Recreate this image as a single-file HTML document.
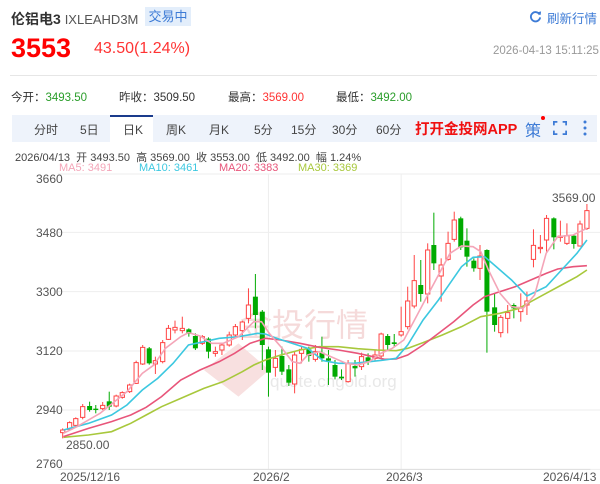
<!DOCTYPE html>
<html><head><meta charset="utf-8"><style>
*{margin:0;padding:0;box-sizing:border-box}
body{width:600px;height:482px;background:#fff;font-family:"Liberation Sans","Noto Sans CJK SC",sans-serif;position:relative;overflow:hidden;color:#333}
.a{position:absolute;white-space:nowrap}
.ax{position:absolute;font-size:12px;color:#555;white-space:nowrap}
</style></head><body>
<div class="a" style="left:11px;top:9px;font-size:14px;font-weight:bold;color:#333">伦铝电3 <span style="font-weight:normal;color:#555;font-size:13px">IXLEAHD3M</span></div>
<div class="a" style="left:145px;top:7px;width:46px;height:19px;background:#e3eefb;color:#3d7bd6;font-size:13px;line-height:19px;text-align:center">交易中</div>
<svg class="a" style="left:529px;top:10px" width="13" height="13" viewBox="0 0 14 14"><path d="M11.5 5A5 5 0 1 0 12 8" fill="none" stroke="#3d7bd6" stroke-width="2"/><path d="M9 2.5L12.5 5.5 13 1.5z" fill="#3d7bd6"/></svg>
<div class="a" style="left:547px;top:8px;font-size:12.5px;color:#3d7bd6">刷新行情</div>
<div class="a" style="left:11px;top:33px;font-size:27px;font-weight:bold;color:#f00">3553</div>
<div class="a" style="left:94px;top:40px;font-size:16px;color:#f33">43.50(1.24%)</div>
<div class="a" style="left:493px;top:45px;font-size:11.5px;color:#999">2026-04-13 15:11:25</div>
<div class="a" style="left:10px;top:75px;width:587px;height:1px;background:#e6e6e6"></div>
<div class="a" style="left:11px;top:89px;font-size:11.5px;color:#333">今开：<span style="color:#2a9d2a">3493.50</span></div>
<div class="a" style="left:119px;top:89px;font-size:11.5px;color:#333">昨收：3509.50</div>
<div class="a" style="left:228px;top:89px;font-size:11.5px;color:#333">最高：<span style="color:#f33">3569.00</span></div>
<div class="a" style="left:336px;top:89px;font-size:11.5px;color:#333">最低：<span style="color:#2a9d2a">3492.00</span></div>
<div class="a" style="left:12px;top:115px;width:585px;height:27px;background:#eef3fb"></div>
<div class="a" style="left:110px;top:115px;width:43px;height:28px;background:#fff;border-top:2px solid #1a3b8c"></div>
<div class="a" style="left:0;top:121px;font-size:12px;color:#444;width:600px">
<span class="a" style="left:34px">分时</span><span class="a" style="left:80px">5日</span><span class="a" style="left:123px">日K</span><span class="a" style="left:166px">周K</span><span class="a" style="left:209px">月K</span><span class="a" style="left:254px">5分</span><span class="a" style="left:291px">15分</span><span class="a" style="left:332px">30分</span><span class="a" style="left:376px">60分</span></div>
<div class="a" style="left:415px;top:118px;font-size:14.5px;font-weight:bold;color:#f01010">打开金投网APP</div>
<div class="a" style="left:525px;top:117px;font-size:16px;color:#3d7bd6">策</div>
<div class="a" style="left:541px;top:116px;width:4px;height:4px;border-radius:2px;background:#f00"></div>
<svg class="a" style="left:553px;top:121px" width="14" height="14" viewBox="0 0 16 16" fill="none" stroke="#3d7bd6" stroke-width="2"><path d="M1 5V1h4M11 1h4v4M15 11v4h-4M5 15H1v-4"/></svg>
<svg class="a" style="left:582px;top:119px" width="6" height="18"><circle cx="3" cy="3" r="1.5" fill="#3d7bd6"/><circle cx="3" cy="9" r="1.5" fill="#3d7bd6"/><circle cx="3" cy="15" r="1.5" fill="#3d7bd6"/></svg>
<div class="a" style="left:15px;top:149px;font-size:11px;color:#444">2026/04/13 &nbsp;开 3493.50 &nbsp;高 3569.00 &nbsp;收 3553.00 &nbsp;低 3492.00 &nbsp;幅 1.24%</div>
<div class="a" style="left:59px;top:162px;font-size:11px;color:#f4a5b8">MA5: 3491</div>
<div class="a" style="left:139px;top:162px;font-size:11px;color:#3cc8e0">MA10: 3461</div>
<div class="a" style="left:219px;top:162px;font-size:11px;color:#e8557a">MA20: 3383</div>
<div class="a" style="left:298px;top:162px;font-size:11px;color:#a8c83c">MA30: 3369</div>
<div class="a" style="left:240px;top:300px;font-size:32px;color:#f5dada">金投行情</div>
<div class="a" style="left:270px;top:372px;font-size:17px;color:#e8e8e8">quote.cngold.org</div>
<svg id="c" class="a" style="left:0;top:170px" width="600" height="312" viewBox="0 0 1560 936" preserveAspectRatio="none"></svg>
<div class="ax" style="left:36px;top:172px">3660</div>
<div class="ax" style="left:36px;top:226px">3480</div>
<div class="ax" style="left:36px;top:285px">3300</div>
<div class="ax" style="left:36px;top:344px">3120</div>
<div class="ax" style="left:36px;top:403px">2940</div>
<div class="ax" style="left:36px;top:457px">2760</div>
<div class="ax" style="left:60px;top:470px">2025/12/16</div>
<div class="ax" style="left:253px;top:470px">2026/2</div>
<div class="ax" style="left:386px;top:470px">2026/3</div>
<div class="ax" style="left:543px;top:470px">2026/4/13</div>
<div class="ax" style="left:552px;top:191px">3569.00</div>
<div class="ax" style="left:66px;top:438px">2850.00</div>
<script>
var s='';var V='vector-effect="non-scaling-stroke"';
[12,187,365,543,720,898].forEach(function(y){s+='<line x1="150" y1="'+y+'" x2="1560" y2="'+y+'" stroke="#eee" stroke-width="1" '+V+'/>'});
[698,1043].forEach(function(x){s+='<line x1="'+x+'" y1="12" x2="'+x+'" y2="898" stroke="#eee" stroke-width="1" '+V+'/>'});
s+='<line x1="155" y1="898" x2="1535" y2="898" stroke="#ddd" stroke-width="1" '+V+'/>';
s+='<path d="M530 600L620 520 700 600 620 680z" fill="#f8e0e0"/>';
function pl(p,c){s+='<polyline points="'+p+'" fill="none" stroke="'+c+'" stroke-width="1.6" '+V+'/>'}
var K=[[163,'r',780,788,775,805],[181,'r',758,778],[197,'r',746,766],[215,'r',710,742,702,748],[233,'g',708,720,695,725],[249,'g',716,720,705,730],[267,'r',706,716,696,720],[284,'g',694,710,665,720],[302,'r',678,708],[318,'r',668,682],[337,'r',645,665],[354,'r',578,640,572,642],[371,'r',532,582,525,585],[388,'g',535,580],[404,'r',572,582,560,612],[423,'r',518,575,510,580],[438,'r',475,508,465,510],[455,'r',472,480,452,490],[474,'r',475,482,440,490],[491,'g',478,492,475,500],[508,'g',498,535,490,540],[526,'r',500,520,495,525],[542,'g',506,545,502,565],[560,'r',545,550,530,560],[577,'r',525,540,518,555],[596,'r',495,525,485,530],[612,'r',470,495,462,500],[630,'r',456,482,452,510],[646,'r',405,445,355,460],[664,'g',380,435,312,475],[682,'g',425,525,420,600],[698,'g',538,608,530,680],[716,'r',565,592,540,620],[733,'g',558,605,530,615],[751,'g',598,638,585,648],[766,'r',555,642,545,670],[784,'r',538,550,530,580],[803,'g',538,558,530,575],[820,'r',545,568,525,575],[837,'g',548,565,500,575],[854,'g',565,572,540,645],[871,'g',585,620,570,628],[888,'g',620,625,598,630],[905,'r',580,635,570,638],[923,'g',588,595,570,620],[940,'r',560,590,548,600],[957,'g',562,575,550,585],[975,'r',555,565,540,572],[991,'r',492,558,488,565],[1008,'g',498,525,492,540],[1025,'g',517,522,492,530],[1043,'r',485,495,410,500],[1060,'r',393,470,350,478],[1077,'r',332,408,255,415],[1094,'g',345,372,270,395],[1112,'r',240,372,220,400],[1128,'g',225,280,128,300],[1147,'r',285,318,265,395],[1165,'r',220,268,185,272],[1181,'r',150,208,125,215],[1198,'g',145,232,140,240],[1214,'g',212,260,175,290],[1232,'g',272,295,265,305],[1248,'r',258,295,225,330],[1266,'g',240,425,238,548],[1286,'g',412,465,370,485],[1302,'r',442,488,435,502],[1320,'r',428,445,405,490],[1336,'g',405,415,400,445],[1354,'r',412,425,370,455],[1370,'r',393,405,365,435],[1387,'r',226,268,178,292],[1405,'r',232,236,195,250],[1421,'r',145,210,135,245],[1440,'g',145,202,142,238],[1457,'r',198,202,152,215],[1474,'r',197,220,160,225],[1492,'g',197,222,195,236],[1508,'r',162,228,152,230],[1526,'r',122,175,102,180]];
K.forEach(function(k){var c=k[1]=='r'?'#f44':'#0a0';var t=k[2],b=k[3],h=k[4]||t-4,l=k[5]||b+4;
s+='<line x1="'+k[0]+'" y1="'+h+'" x2="'+k[0]+'" y2="'+l+'" stroke="'+c+'" stroke-width="1" '+V+'/>';
if(k[1]=='r')s+='<rect x="'+(k[0]-5.5)+'" y="'+t+'" width="11" height="'+Math.max(b-t,3)+'" fill="#fff" stroke="'+c+'" stroke-width="1" '+V+'/>';
else s+='<rect x="'+(k[0]-6.5)+'" y="'+t+'" width="13" height="'+Math.max(b-t,4)+'" fill="'+c+'"/>';});
pl('165,802 230,795 290,785 340,760 380,735 420,710 470,685 530,655 580,635 630,605 660,585 690,570 730,555 780,540 830,530 880,530 930,536 980,540 1030,542 1060,535 1100,518 1150,495 1200,470 1250,440 1300,430 1350,415 1380,395 1420,370 1460,345 1500,320 1526,300','#a8c83c');
pl('165,800 230,775 290,755 340,735 380,712 420,680 470,630 520,600 570,575 610,550 650,520 690,505 730,510 780,520 830,532 880,540 930,550 970,560 1000,568 1030,567 1060,555 1100,525 1140,490 1180,455 1230,405 1260,380 1300,365 1340,350 1380,330 1420,310 1450,297 1490,290 1526,287','#e8557a');
pl('165,780 230,760 290,735 330,705 370,660 410,625 450,580 490,525 530,515 570,505 620,500 670,490 690,492 720,505 760,520 800,535 840,572 880,580 920,580 960,575 1000,570 1030,565 1060,525 1100,450 1140,390 1170,340 1200,290 1230,262 1260,260 1290,290 1330,330 1370,378 1420,350 1460,300 1500,250 1526,210','#3cc8e0');
pl('165,790 200,770 260,730 330,665 370,610 400,585 430,535 470,500 490,488 520,498 550,520 580,520 620,500 660,455 680,455 700,490 730,530 760,575 780,580 800,555 830,545 860,560 900,580 930,585 960,575 990,550 1020,535 1050,510 1080,445 1110,380 1140,315 1170,250 1200,228 1230,230 1250,245 1270,300 1300,370 1330,410 1360,415 1390,375 1420,250 1450,200 1490,195 1526,175','#f4a5b8');
document.getElementById('c').innerHTML=s;
</script>
</body></html>
